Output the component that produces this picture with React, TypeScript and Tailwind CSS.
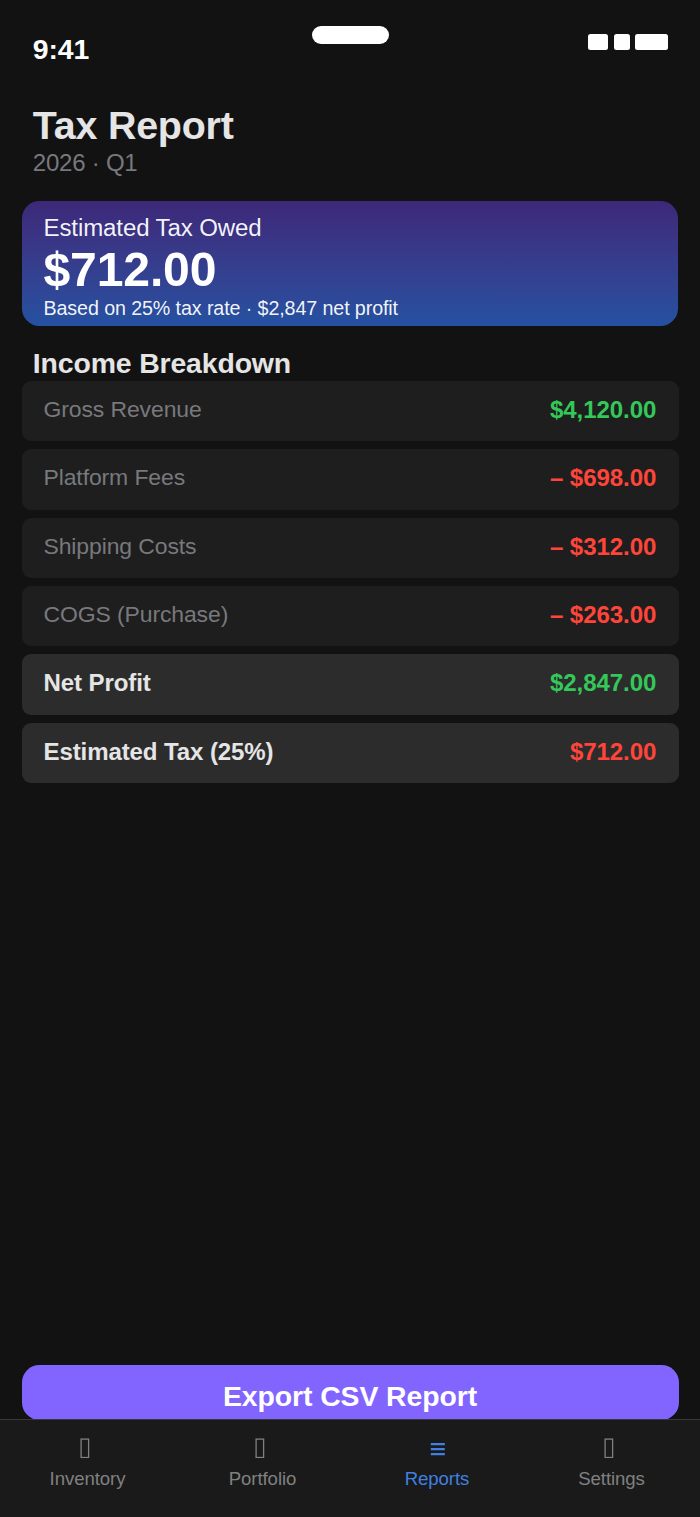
type Row = { label: string; value: string; tone: string; strong?: boolean };

const rows: Row[] = [
  { label: "Gross Revenue", value: "$4,120.00", tone: "text-[#34c759]" },
  { label: "Platform Fees", value: "– $698.00", tone: "text-[#ff453a]" },
  { label: "Shipping Costs", value: "– $312.00", tone: "text-[#ff453a]" },
  { label: "COGS (Purchase)", value: "– $263.00", tone: "text-[#ff453a]" },
  { label: "Net Profit", value: "$2,847.00", tone: "text-[#34c759]", strong: true },
  { label: "Estimated Tax (25%)", value: "$712.00", tone: "text-[#ff453a]", strong: true },
];

function StatusBar() {
  return (
    <header className="grid h-[103px] shrink-0 grid-cols-3 items-start pr-8 pl-[32.8px] text-white">
      <div className="pt-[33px] text-[28.4px] leading-8 font-bold tracking-[-0.1px]">9:41</div>
      <div className="mt-[26px] h-[18px] w-[77px] justify-self-center rounded-full bg-white" />
      <div className="flex justify-end pt-[34px]">
        <span className="mr-[6px] h-[16px] w-[20px] rounded-[2.5px] bg-white" />
        <span className="mr-[4.5px] h-[16px] w-[16px] rounded-[2.5px] bg-white" />
        <span className="h-[16px] w-[33.5px] rounded-[2.5px] bg-white" />
      </div>
    </header>
  );
}

function BreakdownRow({ label, value, tone, strong }: Row) {
  return (
    <li
      className={`flex h-[60.16px] items-start justify-between rounded-[9px] pr-[22.7px] pl-[21.5px] ${
        strong ? "bg-[#2c2c2c]" : "bg-[#1e1e1e]"
      }`}
    >
      <span
        className={
          strong
            ? "pt-[13px] text-[24.06px] leading-8 font-bold tracking-[-0.11px] text-[#e5e5e5]"
            : "pt-[12px] text-[22.97px] leading-8 tracking-[-0.11px] text-[#78787d]"
        }
      >
        {label}
      </span>
      <span className={`pt-[13px] text-[24.06px] leading-8 font-bold tracking-[-0.07px] ${tone}`}>{value}</span>
    </li>
  );
}

function BoxIcon() {
  return (
    <svg width="10" height="20" viewBox="0 0 10 20" fill="none">
      <rect x="1.1" y="1.1" width="7.5" height="18.4" stroke="currentColor" strokeWidth="1.3" />
    </svg>
  );
}

function ListIcon() {
  return (
    <svg width="15" height="20" viewBox="0 0 15 20" fill="currentColor">
      <path d="M0.8 5h14v2.2h-14zM0.8 10h14v2.2h-14zM0.8 15h14v2.2h-14z" />
    </svg>
  );
}

function TabBar() {
  const tabs = [
    { label: "Inventory", pad: "pr-[5px]", shift: "pr-0" },
    { label: "Portfolio", pad: "pr-[6px]", shift: "pr-0" },
    { label: "Reports", pad: "pr-0", shift: "pr-[1px]", active: true },
    { label: "Settings", pad: "pr-[6px]", shift: "pr-[2px]" },
  ];
  return (
    <nav className="grid h-[98px] shrink-0 grid-cols-4 border-t border-[#383838] bg-[#1a1a1a]">
      {tabs.map((tab) => (
        <a
          key={tab.label}
          className={`flex flex-col items-center pt-[18px] ${tab.shift} ${
            tab.active ? "text-[#4080e0]" : "text-[#808080]"
          }`}
        >
          <span className={`flex h-5 ${tab.pad}`}>{tab.active ? <ListIcon /> : <BoxIcon />}</span>
          <span className="mt-[9px] text-[18.6px] leading-6 tracking-[-0.08px]">{tab.label}</span>
        </a>
      ))}
    </nav>
  );
}

export default function App() {
  return (
    <div className="flex h-[1517px] w-[700px] flex-col overflow-hidden bg-[#121212] font-['Liberation_Sans',Arial,sans-serif]">
      <StatusBar />
      <main className="flex min-h-0 grow flex-col pr-[21px] pl-[22px]">
        <div className="pl-[10.8px]">
          <h1 className="h-[45px] text-[39.4px] leading-[44px] font-bold tracking-[-0.2px] text-[#e5e5e5]">
            Tax Report
          </h1>
          <p className="text-[24.06px] leading-[30px] tracking-[-0.25px] text-[#78787d]">2026 · Q1</p>
        </div>
        <section className="mt-[23px] mr-px h-[125px] rounded-[17.5px] bg-linear-to-b from-[#3d2879] to-[#2451a1] px-[21.5px] pt-[11px] text-white">
          <p className="text-[24.06px] leading-8 tracking-[-0.11px] text-white/95">Estimated Tax Owed</p>
          <p className="h-[52px] text-[48.1px] leading-[50px] font-bold tracking-[-0.15px]">$712.00</p>
          <p className="text-[19.7px] leading-6 tracking-[-0.11px] text-white/95">
            Based on 25% tax rate · $2,847 net profit
          </p>
        </section>
        <h2 className="mt-[21px] h-[34px] pl-[10.8px] text-[28.4px] leading-8 font-bold tracking-[-0.13px] text-[#e5e5e5]">
          Income Breakdown
        </h2>
        <ul className="flex flex-col gap-[8.2px]">
          {rows.map((row) => (
            <BreakdownRow key={row.label} {...row} />
          ))}
        </ul>
        <button className="mt-auto -mb-px flex h-[55px] shrink-0 items-start justify-center rounded-[17.5px] bg-[#8264ff] pt-[15px] pr-px text-[28.4px] leading-8 font-bold tracking-[-0.08px] text-white">
          Export CSV Report
        </button>
      </main>
      <TabBar />
    </div>
  );
}
